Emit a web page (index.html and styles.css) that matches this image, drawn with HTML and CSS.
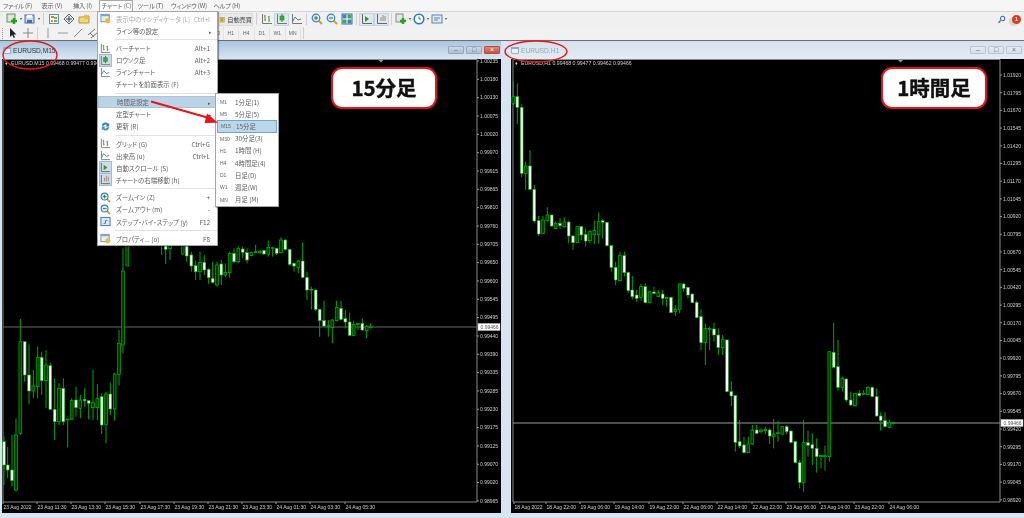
FILE: index.html
```html
<!DOCTYPE html>
<html lang="ja">
<head>
  <meta charset="UTF-8">
  <meta name="viewport" content="width=device-width, initial-scale=1.0">
  <title>MetaTrader 4</title>
  <link rel="stylesheet" href="styles.css">
</head>
<body>
  <svg class="defs">
    <symbol id="i-new" viewBox="0 0 12 12"><rect x="1" y="1" width="8" height="8" fill="#dfe8d8" stroke="#6b8f6b"/><path d="M8 5v6M5 8h6" stroke="#1fa51f" stroke-width="2.4"/></symbol>
    <symbol id="i-save" viewBox="0 0 12 12"><rect x="1" y="2" width="9" height="8" fill="#c8d6ea" stroke="#4a6fa5"/><rect x="3" y="2" width="5" height="3" fill="#f4f7fb"/><rect x="3" y="7" width="5" height="3" fill="#4a6fa5"/></symbol>
    <symbol id="i-watch" viewBox="0 0 12 12"><rect x="1.5" y="1.5" width="9" height="9" fill="#f6f6ea" stroke="#5a9a9a"/><path d="M3 4h3M6 8h3" stroke="#d44" stroke-width="1.6"/><path d="M6 5h3M3 8h2" stroke="#3a3" stroke-width="1.4"/></symbol>
    <symbol id="i-cross" viewBox="0 0 12 12"><path d="M6 1l5 5-5 5-5-5z" fill="#e8eef0" stroke="#567"/><path d="M6 3v6M3 6h6" stroke="#345"/></symbol>
    <symbol id="i-folder" viewBox="0 0 12 12"><path d="M1 4h4l1-1h5v7H1z" fill="#f2d678" stroke="#b8963a"/><path d="M8 1l1 2 2 .3-1.500 1.300.4 2L8 5.600 6.100 6.600l.4-2L5 3.300 7 3z" fill="#f0b93a"/></symbol>
    <symbol id="i-bar" viewBox="0 0 12 12"><path d="M1.500 1v9.500H11" fill="none" stroke="#777"/><path d="M4 2v6M3 3h1M4 7h1M8 3v6M7 4h1M8 7h1" stroke="#5b8f3c"/></symbol>
    <symbol id="i-candle" viewBox="0 0 12 12"><path d="M1.500 1v9.500H11" fill="none" stroke="#777"/><path d="M6 1v8" stroke="#1c8a1c"/><rect x="4" y="3" width="4" height="4" fill="#35b035" stroke="#1c8a1c" stroke-width=".6"/></symbol>
    <symbol id="i-line" viewBox="0 0 12 12"><path d="M1.500 1v9.500H11" fill="none" stroke="#777"/><path d="M2 8l2-4 3 3 3-1" fill="none" stroke="#3b8f8f"/></symbol>
    <symbol id="i-zoomin" viewBox="0 0 12 12"><path d="M7.500 7.500L11 11" stroke="#c9a227" stroke-width="2"/><circle cx="5" cy="5" r="3.800" fill="#d8ecf8" stroke="#3f7fb5" stroke-width="1.200"/><path d="M3 5h4M5 3v4" stroke="#2c7d2c"/></symbol>
    <symbol id="i-zoomout" viewBox="0 0 12 12"><path d="M7.500 7.500L11 11" stroke="#c9a227" stroke-width="2"/><circle cx="5" cy="5" r="3.800" fill="#d8ecf8" stroke="#3f7fb5" stroke-width="1.200"/><path d="M3 5h4" stroke="#2c7d2c"/></symbol>
    <symbol id="i-grid" viewBox="0 0 12 12"><rect x="1" y="1" width="10" height="10" fill="#fff" stroke="#3b6ea5"/><rect x="1.500" y="1.500" width="4" height="4" fill="#3f7fc5"/><rect x="6.500" y="1.500" width="4" height="4" fill="#45a845"/><rect x="1.500" y="6.500" width="4" height="4" fill="#45a845"/><rect x="6.500" y="6.500" width="4" height="4" fill="#3f7fc5"/></symbol>
    <symbol id="i-scroll" viewBox="0 0 12 12"><path d="M1.500 1v9.500H11" fill="none" stroke="#666"/><path d="M4 3l4 3-4 3z" fill="#2c9a2c"/></symbol>
    <symbol id="i-shift" viewBox="0 0 12 12"><path d="M1.500 1v9.500H11" fill="none" stroke="#666"/><path d="M7 2v6M5 4v4M9 3v5" stroke="#a08a6a"/></symbol>
    <symbol id="i-refresh" viewBox="0 0 12 12"><path d="M2 5a4 4 0 0 1 7-2l1-1v4H6l1.500-1.500A2.500 2.500 0 0 0 3.500 6z" fill="#3a7fc0"/><path d="M10 7a4 4 0 0 1-7 2l-1 1V6h4L4.500 7.500A2.500 2.500 0 0 0 8.500 6z" fill="#3a9ad0"/></symbol>
    <symbol id="i-step" viewBox="0 0 12 12"><rect x="1" y="1.500" width="10" height="9" fill="#dbe7f4" stroke="#3f6ea5"/><path d="M4 8h2V5h2" fill="none" stroke="#3f6ea5"/></symbol>
    <symbol id="i-props" viewBox="0 0 12 12"><rect x="1" y="1.500" width="9" height="8" fill="#e6eef6" stroke="#6d8cab"/><rect x="1" y="1.500" width="9" height="2" fill="#7fa4c8"/><circle cx="8.500" cy="8.500" r="2.800" fill="#e8bf3a"/></symbol>
    <symbol id="i-window" viewBox="0 0 12 12"><rect x="1" y="2" width="10" height="9" fill="#e8f0f8" stroke="#6f93b8"/><rect x="1" y="2" width="10" height="2.500" fill="#86aed4"/></symbol>
    <symbol id="i-robot" viewBox="0 0 12 12"><rect x="2" y="2" width="8" height="9" fill="#f1c84a" stroke="#a98a20"/><path d="M4 5h4M4 7.500h4" stroke="#2f8f2f" stroke-width="1.300"/></symbol>
    <symbol id="i-tmpl" viewBox="0 0 12 12"><rect x="1" y="1" width="7" height="8" fill="#e6e6e6" stroke="#888"/><path d="M8 5v6M5 8h6" stroke="#1fa51f" stroke-width="2.400"/></symbol>
    <symbol id="i-clock" viewBox="0 0 12 12"><circle cx="6" cy="6" r="4.800" fill="#fff" stroke="#2a78c0" stroke-width="1.600"/><path d="M6 3.500V6h2" fill="none" stroke="#2a78c0"/></symbol>
    <symbol id="i-box" viewBox="0 0 12 12"><rect x="1" y="2" width="10" height="8" fill="#dfeaf6" stroke="#5c86b0"/><path d="M3 5h6M3 7h4" stroke="#5c86b0"/></symbol>
    <symbol id="i-search" viewBox="0 0 12 12"><path d="M5 7l-3 3.500" stroke="#3b6fc4" stroke-width="1.800"/><circle cx="7.500" cy="4.500" r="2.800" fill="#fff" stroke="#3b6fc4" stroke-width="1.400"/></symbol>
    <symbol id="i-arrow" viewBox="0 0 12 12"><path d="M3 1v9l2.200-2 1.500 3 1.300-.7-1.500-2.800H9.500z" fill="#222"/></symbol>
    <symbol id="i-hair" viewBox="0 0 12 12"><path d="M6 1v10M1 6h10" stroke="#888"/></symbol>
    <symbol id="i-vline" viewBox="0 0 12 12"><path d="M6 1v10" stroke="#999"/></symbol>
    <symbol id="i-hline" viewBox="0 0 12 12"><path d="M1 6h10" stroke="#999"/></symbol>
    <symbol id="i-tline" viewBox="0 0 12 12"><path d="M2 10l8-8" stroke="#888"/></symbol>
    <symbol id="i-channel" viewBox="0 0 12 12"><path d="M1 8l7-6M4 11l7-6M3 6l4 4" stroke="#777"/></symbol>
  </svg>

  <div class="app">
    <nav class="menubar">
      <span class="menubar-item">ファイル (F)</span>
      <span class="menubar-item">表示 (V)</span>
      <span class="menubar-item">挿入 (I)</span>
      <span class="menubar-item is-open">チャート (C)</span>
      <span class="menubar-item">ツール (T)</span>
      <span class="menubar-item">ウィンドウ (W)</span>
      <span class="menubar-item">ヘルプ (H)</span>
    </nav>

    <div class="toolbar">
      <div class="toolbar-left">
        <span class="tool tool-wide"><svg><use href="#i-new"/></svg><i class="caret"></i></span>
        <span class="tool tool-wide"><svg><use href="#i-save"/></svg><i class="caret"></i></span>
        <span class="sep"></span>
        <span class="tool"><svg><use href="#i-watch"/></svg></span>
        <span class="tool"><svg><use href="#i-cross"/></svg></span>
        <span class="tool"><svg><use href="#i-folder"/></svg></span>
      </div>
      <span class="auto-btn"><svg><use href="#i-robot"/></svg>自動売買</span>
      <span class="sep"></span>
      <span class="tool"><svg><use href="#i-bar"/></svg></span>
      <span class="tool is-on"><svg><use href="#i-candle"/></svg></span>
      <span class="tool"><svg><use href="#i-line"/></svg></span>
      <span class="sep"></span>
      <span class="tool"><svg><use href="#i-zoomin"/></svg></span>
      <span class="tool"><svg><use href="#i-zoomout"/></svg></span>
      <span class="tool"><svg><use href="#i-grid"/></svg></span>
      <span class="sep"></span>
      <span class="tool is-on"><svg><use href="#i-scroll"/></svg></span>
      <span class="tool is-on"><svg><use href="#i-shift"/></svg></span>
      <span class="sep"></span>
      <span class="tool tool-wide"><svg><use href="#i-tmpl"/></svg><i class="caret"></i></span>
      <span class="tool tool-wide"><svg><use href="#i-clock"/></svg><i class="caret"></i></span>
      <span class="tool tool-wide"><svg><use href="#i-box"/></svg><i class="caret"></i></span>
      <div class="toolbar-end">
        <svg class="search-icon"><use href="#i-search"/></svg>
        <span class="notice">1</span>
      </div>
    </div>

    <div class="toolbar toolbar-last">
      <div class="toolbar-left toolbar-left-short">
        <span class="grip"></span>
        <span class="tool"><svg><use href="#i-arrow"/></svg></span>
        <span class="tool"><svg><use href="#i-hair"/></svg></span>
        <span class="sep"></span>
        <span class="tool"><svg><use href="#i-vline"/></svg></span>
        <span class="tool"><svg><use href="#i-hline"/></svg></span>
        <span class="tool"><svg><use href="#i-tline"/></svg></span>
        <span class="tool"><svg><use href="#i-channel"/></svg></span>
      </div>
      <span class="period">M30</span>
      <span class="period">H1</span>
      <span class="period">H4</span>
      <span class="period">D1</span>
      <span class="period">W1</span>
      <span class="period">MN</span>
      <span class="sep"></span>
    </div>

    <main class="desktop">
      <section class="chart-window chart-window-left">
        <header class="titlebar is-active">
          <svg class="title-icon"><use href="#i-window"/></svg>
          <span class="title-text">EURUSD,M15</span>
          <div class="win-buttons">
            <span class="win-btn">&#8211;</span>
            <span class="win-btn">&#9633;</span>
            <span class="win-btn win-close">&#215;</span>
          </div>
        </header>
        <div class="canvas">
          <svg id="chart-m15" class="chart" viewBox="2 59 499 454"></svg>
          <div class="callout callout-m15">15分足</div>
        </div>
      </section>

      <section class="chart-window chart-window-right">
        <header class="titlebar">
          <svg class="title-icon"><use href="#i-window"/></svg>
          <span class="title-text">EURUSD,H1</span>
          <div class="win-buttons">
            <span class="win-btn">&#8211;</span>
            <span class="win-btn">&#9633;</span>
            <span class="win-btn">&#215;</span>
          </div>
        </header>
        <div class="canvas">
          <svg id="chart-h1" class="chart" viewBox="511 59 513 454"></svg>
          <div class="callout callout-h1">1時間足</div>
        </div>
      </section>
    </main>

    <div class="menu">
      <div class="menu-row is-disabled"><svg><use href="#i-props"/></svg><span class="menu-label">表示中のインディケータ (L)</span><span class="menu-key">Ctrl+I</span></div>
      <div class="menu-row"><span class="menu-label">ライン等の設定</span><span class="menu-more">&#9656;</span></div>
      <div class="menu-sep"></div>
      <div class="menu-row"><svg><use href="#i-bar"/></svg><span class="menu-label">バーチャート</span><span class="menu-key">Alt+1</span></div>
      <div class="menu-row"><svg class="is-on"><use href="#i-candle"/></svg><span class="menu-label">ロウソク足</span><span class="menu-key">Alt+2</span></div>
      <div class="menu-row"><svg><use href="#i-line"/></svg><span class="menu-label">ラインチャート</span><span class="menu-key">Alt+3</span></div>
      <div class="menu-row"><span class="menu-label">チャートを前面表示 (F)</span></div>
      <div class="menu-sep"></div>
      <div class="menu-row is-selected"><span class="menu-label">時間足設定</span><span class="menu-more">&#9656;</span></div>
      <div class="menu-row"><span class="menu-label">定型チャート</span><span class="menu-more">&#9656;</span></div>
      <div class="menu-row"><svg><use href="#i-refresh"/></svg><span class="menu-label">更新 (R)</span></div>
      <div class="menu-sep"></div>
      <div class="menu-row"><svg><use href="#i-bar"/></svg><span class="menu-label">グリッド (G)</span><span class="menu-key">Ctrl+G</span></div>
      <div class="menu-row"><svg><use href="#i-line"/></svg><span class="menu-label">出来高 (u)</span><span class="menu-key">Ctrl+L</span></div>
      <div class="menu-row"><svg class="is-on"><use href="#i-scroll"/></svg><span class="menu-label">自動スクロール (S)</span></div>
      <div class="menu-row"><svg class="is-on"><use href="#i-shift"/></svg><span class="menu-label">チャートの右端移動 (h)</span></div>
      <div class="menu-sep"></div>
      <div class="menu-row"><svg><use href="#i-zoomin"/></svg><span class="menu-label">ズームイン (Z)</span><span class="menu-key">+</span></div>
      <div class="menu-row"><svg><use href="#i-zoomout"/></svg><span class="menu-label">ズームアウト (m)</span><span class="menu-key">-</span></div>
      <div class="menu-row"><svg><use href="#i-step"/></svg><span class="menu-label">ステップ・バイ・ステップ (y)</span><span class="menu-key">F12</span></div>
      <div class="menu-sep"></div>
      <div class="menu-row"><svg><use href="#i-props"/></svg><span class="menu-label">プロパティ... (o)</span><span class="menu-key">F8</span></div>
    </div>

    <div class="submenu">
      <div class="sub-row"><span class="sub-code">M1</span>1分足(1)</div>
      <div class="sub-row"><span class="sub-code">M5</span>5分足(5)</div>
      <div class="sub-row is-selected"><span class="sub-code">M15</span>15分足</div>
      <div class="sub-row"><span class="sub-code">M30</span>30分足(3)</div>
      <div class="sub-row"><span class="sub-code">H1</span>1時間 (H)</div>
      <div class="sub-row"><span class="sub-code">H4</span>4時間足(4)</div>
      <div class="sub-row"><span class="sub-code">D1</span>日足(D)</div>
      <div class="sub-row"><span class="sub-code">W1</span>週足(W)</div>
      <div class="sub-row"><span class="sub-code">MN</span>月足 (M)</div>
    </div>

    <svg class="marks" viewBox="0 0 1024 518">
      <ellipse cx="30" cy="55" rx="27" ry="14" />
      <ellipse cx="536" cy="51.500" rx="31" ry="10.500" />
      <path class="arrow-line" d="M151 101.500L209 118" />
      <path class="arrow-head" d="M218 122.700L207 113.500L204.500 123z" />
    </svg>
  </div>

  <script src="chart.js"></script>
</body>
</html>
```

FILE: styles.css
```css
* { box-sizing: border-box; }
html, body { margin: 0; padding: 0; }
body { width: 1024px; height: 518px; overflow: hidden; background: #d6e5f2; font-family: "Noto Sans CJK JP", "Liberation Sans", sans-serif; color: #5c5c5c; }
.defs { display: none; }
.app { position: relative; width: 1024px; height: 518px; display: flex; flex-direction: column; filter: blur(0.45px); }

.menubar { display: flex; height: 12px; padding-left: 1px; background: #f6f6f6; border-bottom: 1px solid #d4d4d4; font-size: 6.2px; line-height: 11px; letter-spacing: -.15px; font-feature-settings: "palt"; }
.menubar-item { padding: 0 2px; margin-right: 6.5px; white-space: nowrap; }
.menubar-item:nth-child(1) { width: 32px; }
.menubar-item:nth-child(2) { width: 25px; }
.menubar-item:nth-child(3) { width: 21px; }
.menubar-item:nth-child(4) { width: 34px; margin-right: 3px; }
.menubar-item:nth-child(5) { width: 27px; }
.menubar-item:nth-child(6) { width: 36px; }
.menubar-item.is-open { background: #fff; border: 1px solid #a8a8a8; border-bottom: 0; line-height: 10px; }

.toolbar { display: flex; align-items: center; height: 14px; background: #f0f0f0; }
.toolbar-last { background: #f1f1f1; border-bottom: 1px solid #6e6e6e; height: 15px; }
.toolbar-left { display: flex; align-items: center; width: 217px; padding-left: 5px; flex: none; }
.toolbar-left-short { width: 208px; padding-left: 2px; }
.tool { display: flex; align-items: center; justify-content: center; width: 15px; height: 13px; flex: none; }
.tool svg { width: 12px; height: 12px; }
.tool-wide { width: 18px; }
.tool.is-on { background: #dfe7ef; border: 1px solid #c4d4e4; }
.caret { width: 0; height: 0; margin-left: 2px; border: 1.5px solid transparent; border-top: 2px solid #444; border-bottom: 0; }
.sep { width: 1px; height: 12px; margin: 0 2px; background: #cfcfcf; flex: none; }
.grip { width: 2px; height: 11px; margin-right: 1px; border-left: 1px dotted #999; }
.auto-btn { display: flex; align-items: center; gap: 2px; width: 36px; height: 13px; padding-left: 1px; margin-right: 1px; background: #e9e9e9; border: 1px solid #dcdcdc; font-size: 6.2px; color: #444; white-space: nowrap; flex: none; }
.auto-btn svg { width: 8px; height: 9px; }
.toolbar-end { display: flex; align-items: center; margin-left: auto; padding-right: 3px; gap: 6px; }
.search-icon { width: 9px; height: 9px; }
.notice { width: 9px; height: 9px; border-radius: 50%; background: #e03a1e; color: #fff; font: bold 6px/9px "Liberation Sans", sans-serif; text-align: center; box-shadow: -3px 2px 0 #d5d5d5; }
.period { width: 15.5px; font: 5px/13px "Liberation Sans", sans-serif; color: #666; text-align: center; border-right: 1px solid #e2e2e2; flex: none; }

.desktop { flex: 1; display: flex; gap: 5px; padding-bottom: 5px; background: #d6e5f2; }
.chart-window { display: flex; flex-direction: column; }
.chart-window-left { width: 501px; padding-left: 2px; }
.chart-window-right { width: 518px; padding-left: 5px; }
.titlebar { display: flex; align-items: center; height: 18px; margin-left: -5px; padding: 0 2px 0 5px; background: linear-gradient(#d5e1ed, #e4ecf4); font: 6.6px "Liberation Sans", sans-serif; color: #9aa6b2; }
.chart-window-left .titlebar { margin-left: -2px; padding-left: 3px; padding-right: 1px; }
.titlebar.is-active { background: linear-gradient(#a9c5e0, #dae6f1); color: #333; }
.title-icon { width: 8px; height: 8px; margin-right: 2px; }
.win-buttons { display: flex; gap: 2px; margin-left: auto; }
.win-btn { width: 16px; height: 8px; background: linear-gradient(#cdd9e6, #aebfd1); border: 1px solid #98a9bb; border-radius: 1px; color: #667; font-size: 7px; line-height: 5px; text-align: center; }
.win-close { background: linear-gradient(#e08a78, #c94f3a); border-color: #b0503f; color: #fff; }
.chart-window-right .win-btn { background: linear-gradient(#e4ebf2, #d5dfe9); border-color: #b8c4d0; }

.canvas { position: relative; flex: 1; background: #000; }
.chart { display: block; width: 100%; height: 100%; }
.axis-frame { fill: none; stroke: #8a8a8a; stroke-width: 1; }
.axis-tick { stroke: #999; stroke-width: 1; }
.axis-text { font: 5px "Liberation Sans", sans-serif; fill: #cfcfcf; }
.chart-head { font: 5.2px "Liberation Sans", sans-serif; fill: #cfcfcf; }
.price-line { stroke-width: 1; }
.price-box { fill: #fff; stroke: #bbb; stroke-width: .5; }
.price-text { font: 5px "Liberation Sans", sans-serif; fill: #555; }
.wick { stroke: #00a800; stroke-width: 1; }
.body-down { fill: #fff; stroke: #00b400; stroke-width: .6; }
.body-up { fill: #003800; stroke: #00b400; stroke-width: .7; }

.callout { position: absolute; top: 8px; width: 106px; height: 42px; background: #fff; border: 2px solid #e8141c; border-radius: 11px; color: #111; font-size: 20.5px; font-weight: 700; line-height: 37px; text-align: center; white-space: nowrap; -webkit-text-stroke: .4px #111; }
.callout-m15 { left: 329px; }
.callout-h1 { left: 370px; }

.menu { position: absolute; left: 97px; top: 11px; width: 121px; height: 235px; padding-top: 1px; background: #fff; border: 1px solid #a6a6a6; box-shadow: 1px 1px 1px rgba(0, 0, 0, .35); font-size: 6.4px; font-feature-settings: "palt"; }
.menu-row { position: relative; display: flex; align-items: center; height: 12.1px; padding-left: 18px; padding-right: 7px; white-space: nowrap; }
.menu-row svg { position: absolute; left: 2px; top: 0; width: 11px; height: 11px; }
.menu-row svg.is-on { background: #cddcec; outline: 1px solid #9fbbd6; }
.menu-key { margin-left: auto; }
.menu-more { margin-left: auto; font-size: 5px; margin-right: -2px; }
.menu-sep { height: 5.4px; margin-left: 17px; background: linear-gradient(#fff 2px, #e2e2e2 2px, #e2e2e2 3px, #fff 3px); }
.menu-row.is-selected { background: #bcd3e6; border: 1px solid #a9c3da; }
.menu-row.is-disabled { color: #aaa; }

.submenu { position: absolute; left: 215px; top: 93px; width: 64px; height: 114px; padding: 2px 0 0 1px; background: #fff; border: 1px solid #a6a6a6; box-shadow: 1px 1px 1px rgba(0, 0, 0, .35); font-size: 6.4px; font-feature-settings: "palt"; }
.sub-row { display: flex; align-items: center; height: 12.2px; white-space: nowrap; }
.sub-code { width: 18px; padding-left: 3px; font: 5px "Liberation Sans", sans-serif; color: #666; }
.sub-row.is-selected { background: #bcd6ea; border: 1px solid #6ea6d6; margin-right: 1px; }

.marks { position: absolute; left: 0; top: 0; width: 1024px; height: 518px; pointer-events: none; }
.marks ellipse { fill: none; stroke: #e8141c; stroke-width: 1.4; }
.arrow-line { stroke: #e8141c; stroke-width: 2; }
.arrow-head { fill: #e8141c; }
```

FILE: chart.js
```js
// candles as [x, kind, wickTop, bodyTop, bodyBottom, wickBottom], read off 3x crops
// each block has the crop origin, so px = origin + value / 3
const m15 = [
  { ox: 0, oy: 230, rows: [
    [12,"w",620,635,705,765],[23,"w",650,705,720,745],[36,"w",615,720,752,770],[48,"g",565,615,780,785],
    [61,"g",267,335,610,615],[74,"w",335,335,435,455],[87,"w",343,435,483,522],[100,"g",420,468,483,505],
    [113,"g",350,382,470,505],[125,"w",365,382,452,495],[138,"g",360,405,452,535],[151,"w",398,407,538,540],
    [164,"w",445,538,575,630],[177,"g",460,475,575,585],[190,"w",445,475,575,585],[203,"g",567,567,570,652],
    [215,"g",505,512,568,570],[228,"w",470,510,533,560],[241,"g",495,510,535,565],[254,"w",475,508,512,530],
    [266,"w",510,512,520,568],[279,"g",420,518,533,570],[292,"g",462,505,533,570],[305,"w",490,500,585,612],
    [318,"g",485,492,583,640],[331,"w",458,492,537,555],[344,"g",430,432,537,572],[357,"g",300,340,433,467],
    [369,"g",55,123,345,370],[382,"g",-30,-30,108,108]
  ]},
  { ox: 120, oy: 230, rows: [
    [125,"g",30,30,40,75],[137,"w",30,45,58,102],[150,"g",30,45,55,90],[188,"g",30,40,72,75],
    [200,"w",30,48,78,95],[214,"w",65,75,108,125],[227,"w",92,107,125,150],[240,"g",65,97,125,150],
    [253,"w",75,97,120,135],[266,"w",115,118,143,162],[278,"w",95,145,157,160],[291,"g",95,105,165,170],
    [304,"w",90,102,135,165],[316,"g",100,127,135,140],[329,"g",65,70,128,143],[342,"w",55,70,95,100],
    [355,"g",50,55,95,100],[368,"w",50,57,67,85],[381,"w",55,68,90,100],[394,"g",65,68,76,78],
    [407,"g",44,65,68,70],[420,"g",60,65,68,72],[432,"w",60,62,72,74],[445,"g",32,52,72,80],
    [458,"g",52,53,55,80],[470,"w",52,55,70,75],[483,"g",22,30,68,70],[496,"w",28,30,58,62],
    [509,"w",58,58,103,108],[522,"w",98,100,108,125],[535,"g",90,93,112,130],[548,"w",37,93,142,145],
    [561,"w",125,142,180,210],[574,"g",170,178,180,238],[587,"w",178,180,238,243],[599,"w",238,238,272,320],
    [612,"w",212,272,288,290],[625,"g",270,287,290,320],[637,"g",268,270,292,340],[650,"g",212,232,272,275],
    [663,"w",212,235,268,270],[676,"w",240,266,276,295],[689,"w",248,276,316,318],[701,"g",272,283,316,318],
    [714,"g",280,280,283,300],[727,"w",265,280,300,303],[740,"g",285,290,302,325],[752,"g",280,288,292,296]
  ]}
];

const h1 = [
  { ox: 500, oy: 60, rows: [
    [40,"g",65,110,130,135],[52,"w",70,110,142,192],[65,"w",133,142,340,352],[77,"g",305,318,340,390],
    [90,"w",270,318,388,390],[103,"w",375,388,483,488],[116,"w",468,482,522,528],[129,"g",468,480,520,522],
    [142,"g",442,465,482,485],[155,"w",465,465,498,500],[167,"g",485,490,506,506],[180,"w",475,490,497,506],
    [193,"g",472,486,500,503],[206,"w",482,486,528,550],[219,"w",525,528,548,570],[232,"g",498,500,548,550],
    [244,"w",498,500,525,540],[257,"w",505,523,543,560],[270,"g",510,515,542,550],[283,"g",482,512,524,552],
    [296,"g",458,485,524,550],[308,"w",478,482,487,535],[321,"w",487,487,557,560],[334,"w",555,557,622,635],
    [347,"w",605,622,660,675],[360,"g",575,587,662,665],[373,"w",575,587,638,650],[385,"w",635,637,692,698]
  ]},
  { ox: 630, oy: 270, rows: [
    [7,"w",18,60,80,88],[20,"w",60,75,85,95],[33,"g",42,50,82,92],[46,"w",40,50,98,100],
    [59,"g",62,65,98,100],[72,"w",50,66,70,72],[85,"g",60,68,80,82],[98,"w",60,72,85,105],
    [110,"g",80,82,85,110],[123,"w",80,82,128,130],[136,"g",105,118,125,138],[149,"g",40,42,118,130],
    [161,"w",38,42,55,65],[174,"w",50,52,75,85],[187,"w",70,72,98,100],[200,"w",92,97,143,145]
  ]},
  { ox: 700, oy: 300, rows: [
    [3,"w",28,50,128,150],[16,"g",70,85,128,195],[29,"g",80,85,88,150],[42,"w",68,87,105,125],
    [55,"w",85,105,143,165],[68,"g",105,118,143,165],[81,"w",118,120,275,277],[94,"w",243,275,288,318],
    [106,"w",285,287,427,455],[119,"w",360,425,438,445],[132,"w",410,435,458,460],[145,"g",410,432,458,458],
    [157,"g",375,390,432,435],[170,"w",375,390,400,402],[183,"g",385,390,395,400],[196,"g",380,388,392,402],
    [209,"w",385,390,408,432],[221,"g",357,402,410,445],[234,"g",363,398,400,425],[247,"g",380,380,402,405],
    [260,"w",375,380,395,402],[273,"w",392,393,427,430],[286,"w",425,425,488,490],[299,"w",480,488,547,565],
    [311,"g",360,428,547,575],[324,"w",392,428,436,470],[337,"w",400,434,445,495],[350,"w",415,445,470,518],
    [363,"g",465,466,470,505],[375,"g",437,467,470,512],[388,"g",155,155,470,485],[401,"w",68,157,202,205],
    [414,"w",120,200,262,272],[427,"g",230,235,262,275],[439,"w",235,237,300,305],[452,"w",275,300,315,318],
    [465,"g",280,280,317,320],[478,"w",270,280,287,290],[491,"g",270,280,283,285],[504,"g",258,262,283,285],
    [517,"w",260,262,290,292],[530,"w",265,290,348,350],[542,"w",337,348,362,392],[555,"w",337,362,380,382],
    [568,"g",358,367,382,385],[581,"g",365,368,371,373]
  ]}
];

function el(svg, tag, attrs, text) {
  const node = document.createElementNS("http://www.w3.org/2000/svg", tag);
  for (const k in attrs) node.setAttribute(k, attrs[k]);
  if (text) node.textContent = text;
  svg.appendChild(node);
}

function drawChart(id, opt) {
  const svg = document.getElementById(id);

  el(svg, "path", { class: "axis-frame", d: `M${opt.left} 59.5V${opt.bottom}H${opt.right}V59.5H${opt.left}` });
  el(svg, "line", { class: "price-line", stroke: opt.lineColor, x1: opt.left, x2: opt.right, y1: opt.lastY, y2: opt.lastY });

  opt.data.forEach(block => {
    block.rows.forEach(([x, kind, wt, bt, bb, wb]) => {
      const px = block.ox + x / 3;
      el(svg, "line", { class: "wick", x1: px, x2: px, y1: block.oy + wt / 3, y2: block.oy + wb / 3 });
      el(svg, "rect", {
        class: kind === "w" ? "body-down" : "body-up",
        x: px - 1.4, width: 2.8,
        y: block.oy + bt / 3, height: Math.max((bb - bt) / 3, 0.6)
      });
    });
  });

  opt.prices.forEach((p, i) => {
    const y = opt.priceTop + i * opt.priceStep;
    el(svg, "line", { class: "axis-tick", x1: opt.right, x2: opt.right + 2, y1: y, y2: y });
    el(svg, "text", { class: "axis-text", x: opt.right + 3, y: y + 1.8 }, p);
  });

  el(svg, "rect", { class: "price-box", x: opt.right + 1, y: opt.lastY - 3.5, width: 22, height: 7 });
  el(svg, "text", { class: "price-text", x: opt.right + 3.5, y: opt.lastY + 1.8 }, "0.99466");

  opt.times.forEach(([x, label]) => {
    el(svg, "line", { class: "axis-tick", x1: x, x2: x, y1: opt.bottom, y2: opt.bottom + 2 });
    el(svg, "text", { class: "axis-text", x: x + 0.5, y: opt.bottom + 7 }, label);
  });

  el(svg, "text", { class: "chart-head", x: opt.left + 2, y: 64.5 }, "\u2666");
  el(svg, "text", { class: "chart-head", x: opt.left + 8, y: 64.5 }, opt.head);
  el(svg, "path", { d: `M${opt.marker - 2.5} 60h5l-2.5 2.5z`, fill: "#8a9aaa" });
}

drawChart("chart-m15", {
  data: m15, left: 3, right: 477, bottom: 502, lastY: 327, lineColor: "#666", marker: 381,
  head: "EURUSD,M15  0.99468 0.99477 0.99462 0.99466",
  priceTop: 61, priceStep: 18.33,
  prices: ["1.00235","1.00180","1.00130","1.00075","1.00020","0.99970","0.99915","0.99865","0.99810","0.99760",
    "0.99705","0.99650","0.99600","0.99545","0.99495","0.99440","0.99390","0.99335","0.99285",
    "0.99230","0.99175","0.99125","0.99070","0.99020","0.98965"],
  times: [[3,"23 Aug 2022"],[37,"23 Aug 11:30"],[71,"23 Aug 13:30"],[105,"23 Aug 15:30"],[140,"23 Aug 17:30"],
    [174,"23 Aug 19:30"],[208,"23 Aug 21:30"],[242,"23 Aug 23:30"],[276,"24 Aug 01:30"],[310,"24 Aug 03:30"],[345,"24 Aug 05:30"]]
});

drawChart("chart-h1", {
  data: h1, left: 513, right: 1000, bottom: 502, lastY: 423, lineColor: "#999", marker: 900.5,
  head: "EURUSD,H1  0.99468 0.99477 0.99462 0.99466",
  priceTop: 75, priceStep: 17.7,
  prices: ["1.01920","1.01795","1.01670","1.01545","1.01420","1.01295","1.01170","1.01045","1.00920","1.00795",
    "1.00670","1.00545","1.00420","1.00295","1.00170","1.00045","0.99920","0.99795","0.99670","0.99545",
    "0.99420","0.99295","0.99170","0.99045","0.98920"],
  times: [[514,"18 Aug 2022"],[546,"18 Aug 22:00"],[580,"19 Aug 06:00"],[614,"19 Aug 14:00"],[649,"19 Aug 22:00"],
    [683,"22 Aug 06:00"],[717,"22 Aug 14:00"],[752,"22 Aug 22:00"],[786,"23 Aug 06:00"],[820,"23 Aug 14:00"],[854,"23 Aug 22:00"],[889,"24 Aug 06:00"]]
});
```
